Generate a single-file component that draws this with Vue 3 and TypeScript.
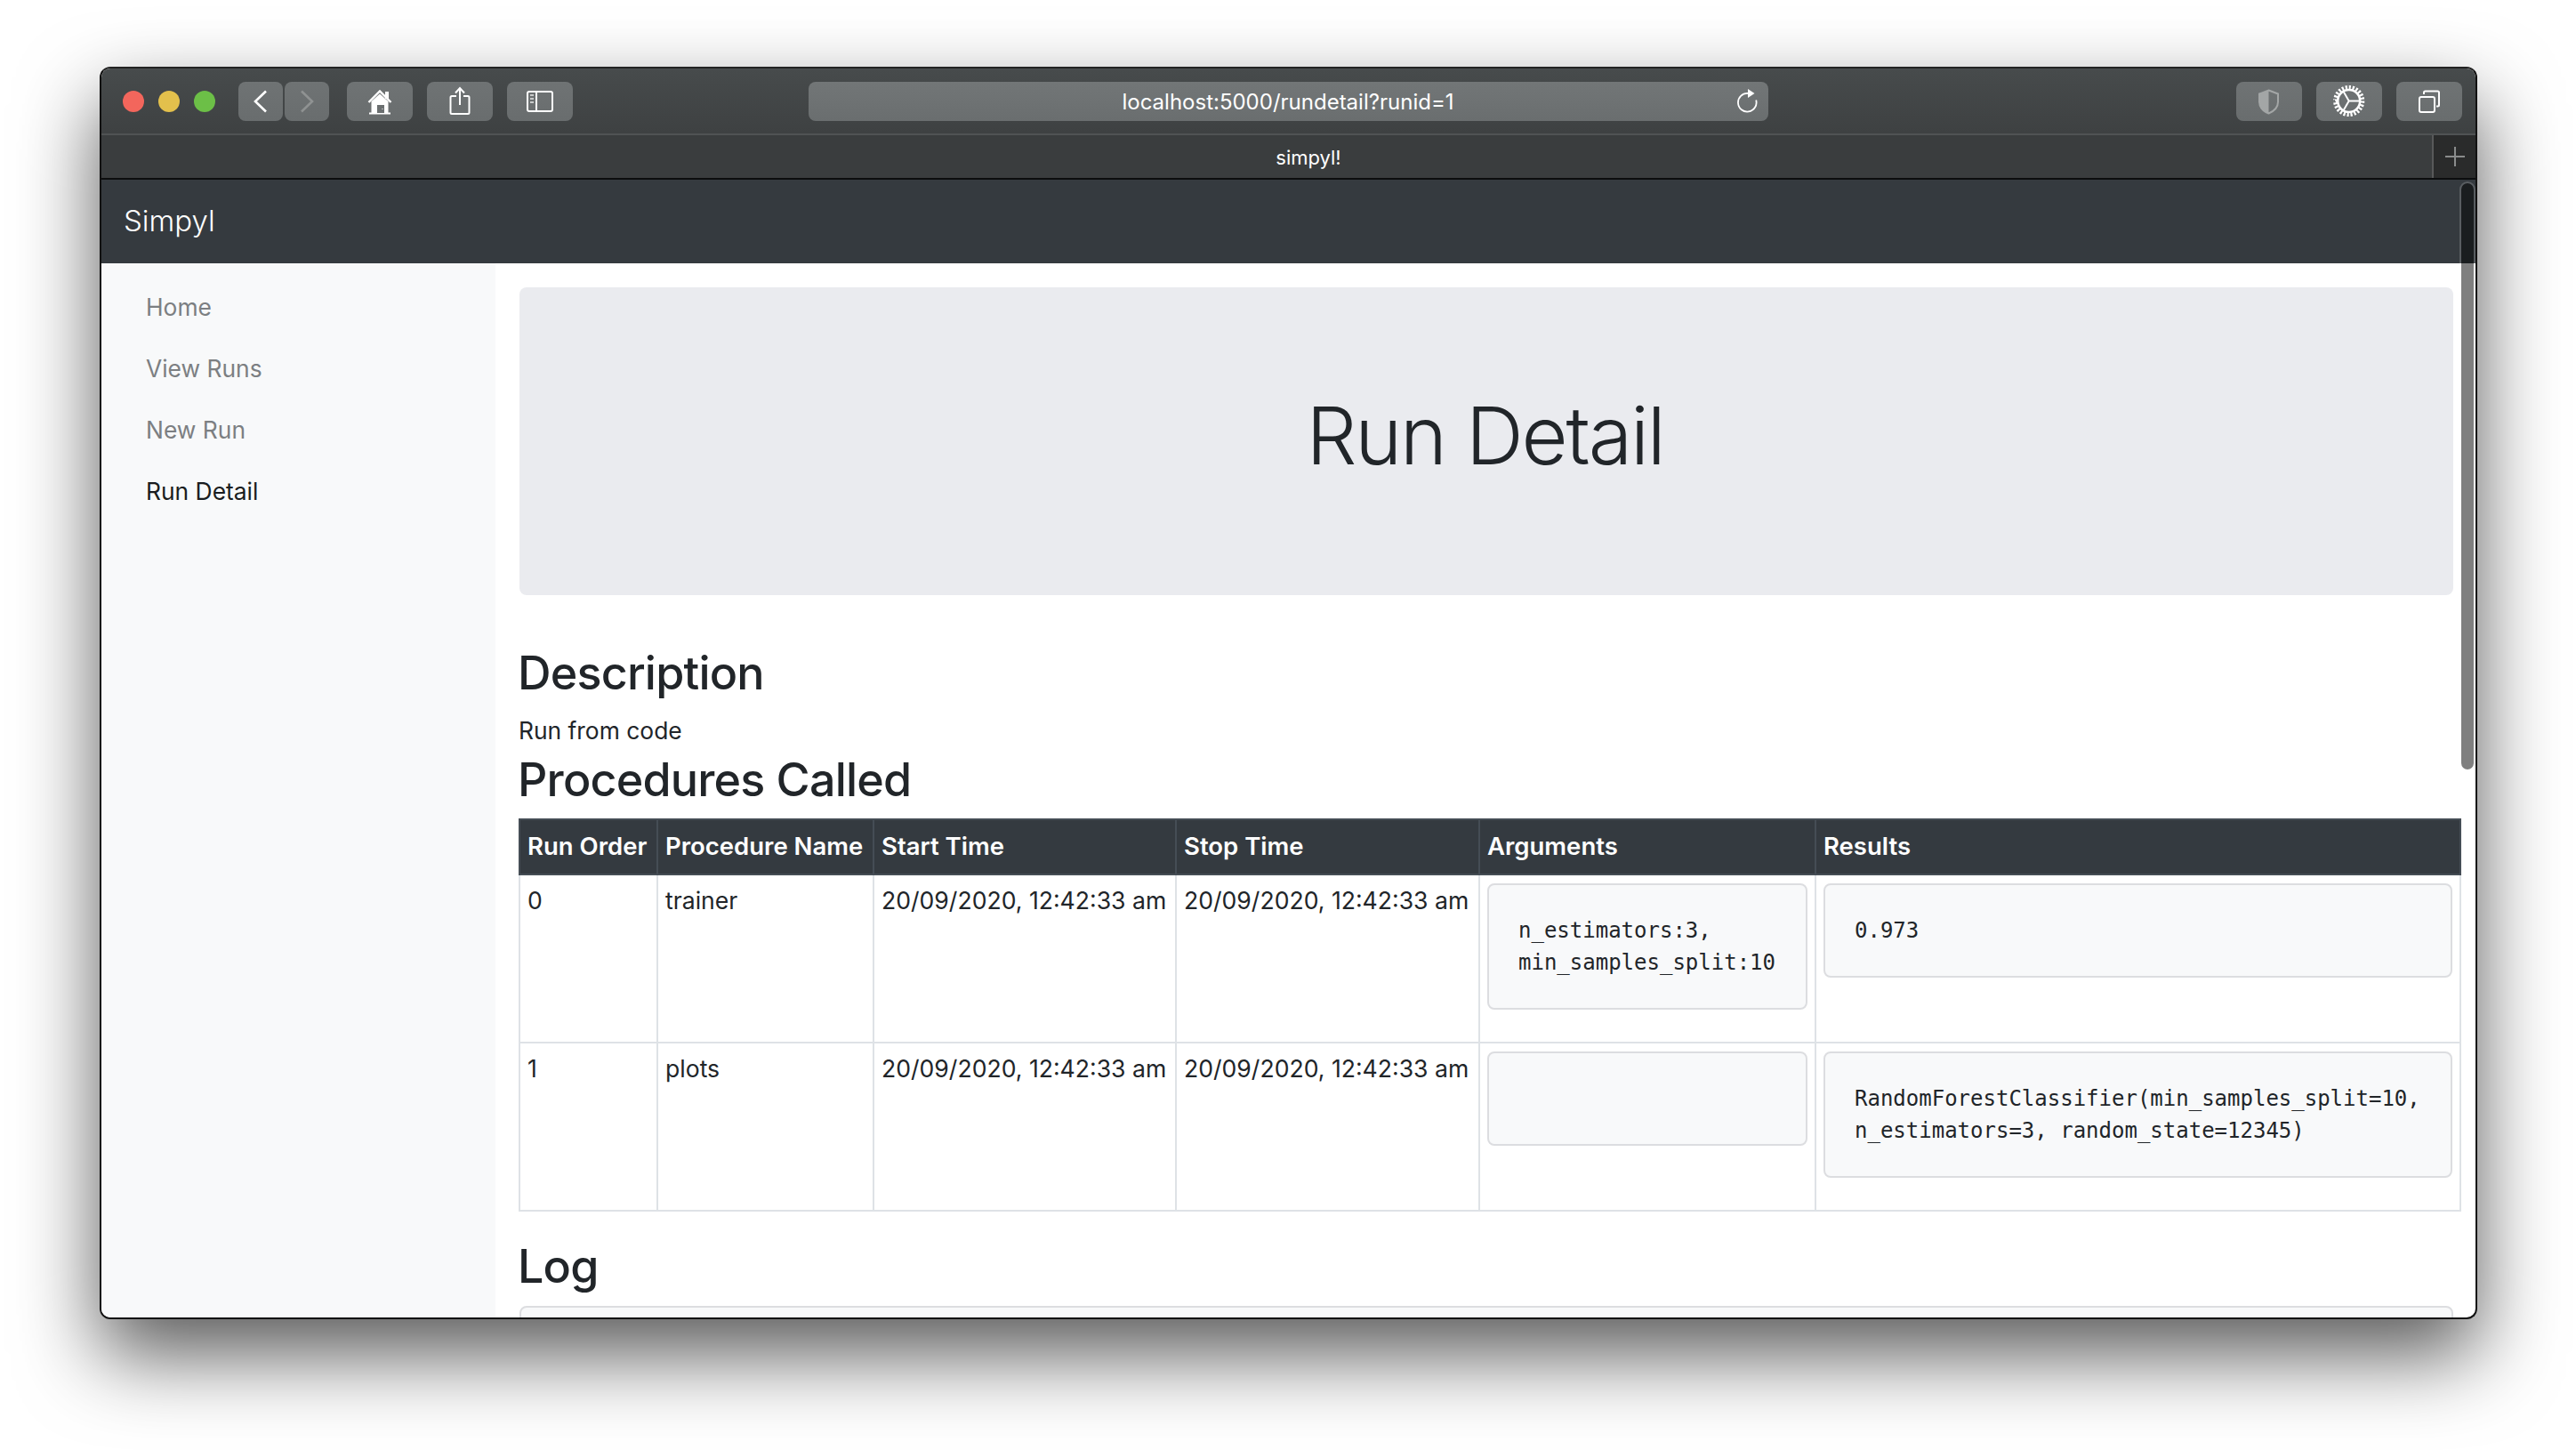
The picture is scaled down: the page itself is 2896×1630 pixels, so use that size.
<template>
  <div class="page">
    <div class="window">
      <!-- barre d'outils safari -->
      <div class="toolbar">
        <div class="lights">
          <span class="light red"></span>
          <span class="light yellow"></span>
          <span class="light green"></span>
        </div>
        <div class="nav-pair">
          <div class="tool-btn small">
            <svg width="50" height="44" viewBox="0 0 50 44"><path d="M31 10.500 19 22l12 11.500" fill="none" stroke="#fff" stroke-width="2.600" /></svg>
          </div>
          <div class="tool-btn small">
            <svg width="50" height="44" viewBox="0 0 50 44"><path d="M19 10.500 31 22 19 33.500" fill="none" stroke="#8f9292" stroke-width="2.600" /></svg>
          </div>
        </div>
        <div class="tool-btn home">
          <svg width="74" height="44" viewBox="0 0 74 44">
            <path d="M24.500 23 37 10.500 49.500 23" fill="none" stroke="#fff" stroke-width="2.400" />
            <path d="M43 11h4v8h-4z" fill="#fff" />
            <path d="M27.500 22 37 13.500 46.500 22v13h-19z" fill="#fff" />
            <path d="M25 34.400h24v2H25z" fill="#fff" />
            <path d="M34 26h8v9h-8z" fill="#6b6f70" />
            <path d="M39.500 30h1v1h-1z" fill="#fff" />
          </svg>
        </div>
        <div class="tool-btn">
          <svg width="74" height="44" viewBox="0 0 74 44" fill="none" stroke="#fff" stroke-width="2">
            <path d="M33 16h-5a1.500 1.500 0 0 0-1.500 1.500v17a1.500 1.500 0 0 0 1.500 1.500h18a1.500 1.500 0 0 0 1.500-1.500v-17A1.500 1.500 0 0 0 46 16h-5" />
            <path d="M37 26V7M32 12.500l5-5.500 5 5.500" />
          </svg>
        </div>
        <div class="tool-btn">
          <svg width="74" height="44" viewBox="0 0 74 44">
            <rect x="23" y="11" width="28" height="22" rx="2" fill="none" stroke="#fff" stroke-width="2" />
            <path d="M33 11v22" stroke="#fff" stroke-width="2" />
            <path d="M26 14h4v2h-4zM26 18h4v2h-4zM26 22h4v2h-4z" fill="#c9cbcb" />
          </svg>
        </div>
        <div class="url-bar">
          <span class="url-text">localhost:5000/rundetail?runid=1</span>
          <svg class="reload" width="24" height="28" viewBox="0 0 24 28">
            <path d="M13 5A10.300 10.300 0 1 0 22.200 12.500" fill="none" stroke="#fff" stroke-width="1.800" />
            <path d="M13 0l7.500 5L13 10z" fill="#fff" />
          </svg>
        </div>
        <div class="tool-btn right-first">
          <svg width="74" height="44" viewBox="0 0 74 44">
            <path d="M36.500 9.500 47 13.500v9c0 6-4.500 10.500-10.500 13-6-2.500-10.500-7-10.500-13v-9z" fill="none" stroke="#a3a6a6" stroke-width="2" />
            <path d="M36.500 9.500v26c-6-2.500-10.500-7-10.500-13v-9z" fill="#a3a6a6" />
          </svg>
        </div>
        <div class="tool-btn">
          <svg width="74" height="44" viewBox="0 0 74 44" fill="none" stroke="#fff">
            <circle cx="36.700" cy="21.500" r="15.300" stroke-width="4.600" pathLength="96" stroke-dasharray="2.200 1.800" />
            <circle cx="36.700" cy="21.500" r="12.500" stroke-width="2.600" />
            <path d="M36.700 21.500H49M36.700 21.500 30.500 10.800M36.700 21.500 30.500 32.200" stroke-width="2" />
          </svg>
        </div>
        <div class="tool-btn">
          <svg width="74" height="44" viewBox="0 0 74 44" fill="none" stroke="#fff" stroke-width="2">
            <rect x="26" y="17" width="17" height="17" rx="2" />
            <path d="M31 14v-2a1.500 1.500 0 0 1 1.500-1.500h14a1.500 1.500 0 0 1 1.500 1.500v14a1.500 1.500 0 0 1-1.500 1.500H45" />
          </svg>
        </div>
      </div>

      <!-- onglets -->
      <div class="tabbar">
        <div class="tab-title">simpyl!</div>
        <div class="tab-plus">
          <svg width="24" height="24" viewBox="0 0 24 24"><path d="M12 1v22M1 12h22" stroke="#8a8c8c" stroke-width="2" /></svg>
        </div>
      </div>

      <!-- page -->
      <div class="viewport">
        <nav class="navbar">Simpyl</nav>
        <div class="layout">
          <aside class="sidebar">
            <a
              v-for="link in links"
              :key="link"
              class="side-link"
              :class="{ active: link === 'Run Detail' }"
            >{{ link }}</a>
          </aside>
          <main class="main">
            <div class="hero"><h1>Run Detail</h1></div>
            <h2 class="section first">Description</h2>
            <p class="desc">Run from code</p>
            <h2 class="section">Procedures Called</h2>
            <table class="runs">
              <colgroup>
                <col class="c-order" />
                <col class="c-name" />
                <col class="c-time" />
                <col class="c-time2" />
                <col class="c-args" />
                <col />
              </colgroup>
              <thead>
                <tr>
                  <th v-for="head in headers" :key="head">{{ head }}</th>
                </tr>
              </thead>
              <tbody>
                <tr v-for="row in rows" :key="row.order">
                  <td>{{ row.order }}</td>
                  <td>{{ row.name }}</td>
                  <td>{{ row.start }}</td>
                  <td>{{ row.stop }}</td>
                  <td><pre class="code">{{ row.args }}</pre></td>
                  <td><pre class="code">{{ row.results }}</pre></td>
                </tr>
              </tbody>
            </table>
            <h2 class="section log-title">Log</h2>
            <pre class="log"></pre>
          </main>
        </div>
        <div class="scroll-thumb"></div>
      </div>
    </div>
  </div>
</template>

<script setup lang="ts">
interface RunRow {
  order: number;
  name: string;
  start: string;
  stop: string;
  args: string;
  results: string;
}

const links: string[] = ["Home", "View Runs", "New Run", "Run Detail"];
const headers: string[] = ["Run Order", "Procedure Name", "Start Time", "Stop Time", "Arguments", "Results"];

const rows: RunRow[] = [
  {
    order: 0,
    name: "trainer",
    start: "20/09/2020, 12:42:33 am",
    stop: "20/09/2020, 12:42:33 am",
    args: "n_estimators:3,\nmin_samples_split:10",
    results: "0.973",
  },
  {
    order: 1,
    name: "plots",
    start: "20/09/2020, 12:42:33 am",
    stop: "20/09/2020, 12:42:33 am",
    args: "",
    results: "RandomForestClassifier(min_samples_split=10,\nn_estimators=3, random_state=12345)",
  },
];
</script>

<style>
html,
body {
  margin: 0;
  background: #fff;
}
</style>

<style scoped>
.page {
  width: 2896px;
  height: 1630px;
  box-sizing: border-box;
  padding: 75px 0 0 112px;
  overflow: hidden;
  background: #fff;
  font-family: Inter, "Liberation Sans", sans-serif;
  color: #212529;
}

.window {
  width: 2673px;
  height: 1408px;
  box-sizing: border-box;
  display: flex;
  flex-direction: column;
  border: 2px solid #111;
  border-top-color: #222;
  border-radius: 12px;
  overflow: hidden;
  background: #fff;
  box-shadow: 0 40px 90px rgba(0, 0, 0, 0.65);
}

.toolbar {
  height: 75px;
  flex: none;
  box-sizing: border-box;
  display: flex;
  align-items: center;
  gap: 16px;
  padding: 0 14px 0 24px;
  background: linear-gradient(#474b4c, #3e4142);
  border-bottom: 2px solid #505354;
}

.lights {
  display: flex;
  gap: 16px;
  margin-right: 10px;
}

.light {
  width: 24px;
  height: 24px;
  border-radius: 50%;
}

.red {
  background: #f3665c;
}

.yellow {
  background: #e3c04c;
}

.green {
  background: #6cbf47;
}

.nav-pair {
  display: flex;
  gap: 2px;
  margin-right: 4px;
}

.tool-btn {
  width: 74px;
  height: 44px;
  flex: none;
  border-radius: 8px;
  background: linear-gradient(#6f7374, #696d6e);
}

.tool-btn.small {
  width: 50px;
}

.tool-btn svg {
  display: block;
}

.url-bar {
  width: 1079px;
  height: 44px;
  flex: none;
  margin: 0 510px 0 249px;
  display: flex;
  align-items: center;
  justify-content: center;
  position: relative;
  box-sizing: border-box;
  padding-top: 2px;
  border-radius: 8px;
  background: linear-gradient(#727677, #6a6e6f);
  color: #fff;
  font-size: 24px;
}

.url-text {
  margin-left: -1px;
}

.reload {
  position: absolute;
  right: 12px;
  top: 8px;
}

.tabbar {
  height: 48px;
  flex: none;
  display: flex;
  justify-content: flex-end;
  background: #3a3d3e;
  border-bottom: 2px solid #0c0d0e;
}

.tab-title {
  flex: 1;
  text-align: center;
  line-height: 50px;
  color: #fff;
  font-size: 22px;
  padding-left: 94px;
}

.tab-plus {
  width: 47px;
  display: flex;
  align-items: center;
  justify-content: center;
  background: #2a2b2b;
  border-left: 2px solid #58595a;
}

.viewport {
  flex: 1;
  min-height: 0;
  position: relative;
  display: flex;
  flex-direction: column;
  overflow: hidden;
}

.navbar {
  height: 94px;
  flex: none;
  box-sizing: border-box;
  display: flex;
  align-items: center;
  padding: 0 0 3px 25px;
  background: #353a3f;
  color: #fff;
  font-size: 33px;
  font-weight: 300;
}

.layout {
  flex: 1;
  min-height: 0;
  display: flex;
}

.sidebar {
  width: 443px;
  flex: none;
  box-sizing: border-box;
  display: flex;
  flex-direction: column;
  padding: 15px 0 0 50px;
  background: #f8f9fa;
}

.side-link {
  height: 69px;
  line-height: 69px;
  font-size: 26.400px;
  color: #7c7f82;
}

.side-link.active {
  color: #1a1d20;
}

.main {
  flex: 1;
  min-width: 0;
  box-sizing: border-box;
  padding: 27px 25px 0 27px;
}

.hero {
  height: 346px;
  box-sizing: border-box;
  padding: 0 3px 12px 0;
  display: flex;
  align-items: center;
  justify-content: center;
  border-radius: 8px;
  background: #eaebef;
}

.hero h1 {
  margin: 0;
  font-size: 90px;
  font-weight: 300;
  letter-spacing: -2.200px;
  line-height: 1.2;
}

.section {
  margin: 0 0 0 -2px;
  height: 66px;
  line-height: 66px;
  font-size: 52px;
  font-weight: 500;
  letter-spacing: -0.800px;
}

.section.first {
  margin-top: 55px;
}

.desc {
  margin: 10px 0 2px -1px;
  line-height: 42px;
  font-size: 26.400px;
}

.runs {
  width: 2184px;
  margin: 10px 0 0 -1px;
  table-layout: fixed;
  border-collapse: collapse;
  font-size: 26.600px;
  line-height: 39px;
}

.c-order {
  width: 155px;
}

.c-name {
  width: 243px;
}

.c-time {
  width: 340px;
}

.c-time2 {
  width: 341px;
}

.c-args {
  width: 378px;
}

th {
  height: 62px;
  box-sizing: border-box;
  padding: 8px 8px 10px;
  text-align: left;
  font-size: 27.500px;
  font-weight: 600;
  white-space: nowrap;
  color: #fff;
  background: #343a40;
  border: 2px solid #454d55;
}

td {
  padding: 9px 8px 0;
  vertical-align: top;
  border: 2px solid #dee2e6;
}

.code {
  margin: 0 0 36px;
  min-height: 36px;
  padding: 33px;
  border: 2px solid #dcdde0;
  border-radius: 8px;
  background: #f8f9fa;
  font-family: "DejaVu Sans Mono", "Liberation Mono", monospace;
  font-size: 24px;
  line-height: 36px;
  color: #212529;
  white-space: pre;
}

.log-title {
  margin-top: 29px;
}

.log {
  height: 120px;
  margin: 11px 0 0;
  box-sizing: border-box;
  border: 2px solid #dcdde0;
  border-radius: 8px;
  background: #f8f9fa;
}

.scroll-thumb {
  position: absolute;
  top: 2px;
  right: 0;
  width: 18px;
  height: 663px;
  box-sizing: border-box;
  border-radius: 9px;
  background: rgba(0, 0, 0, 0.5);
  background-clip: padding-box;
  border: 2px solid rgba(255, 255, 255, 0.18);
}
</style>
